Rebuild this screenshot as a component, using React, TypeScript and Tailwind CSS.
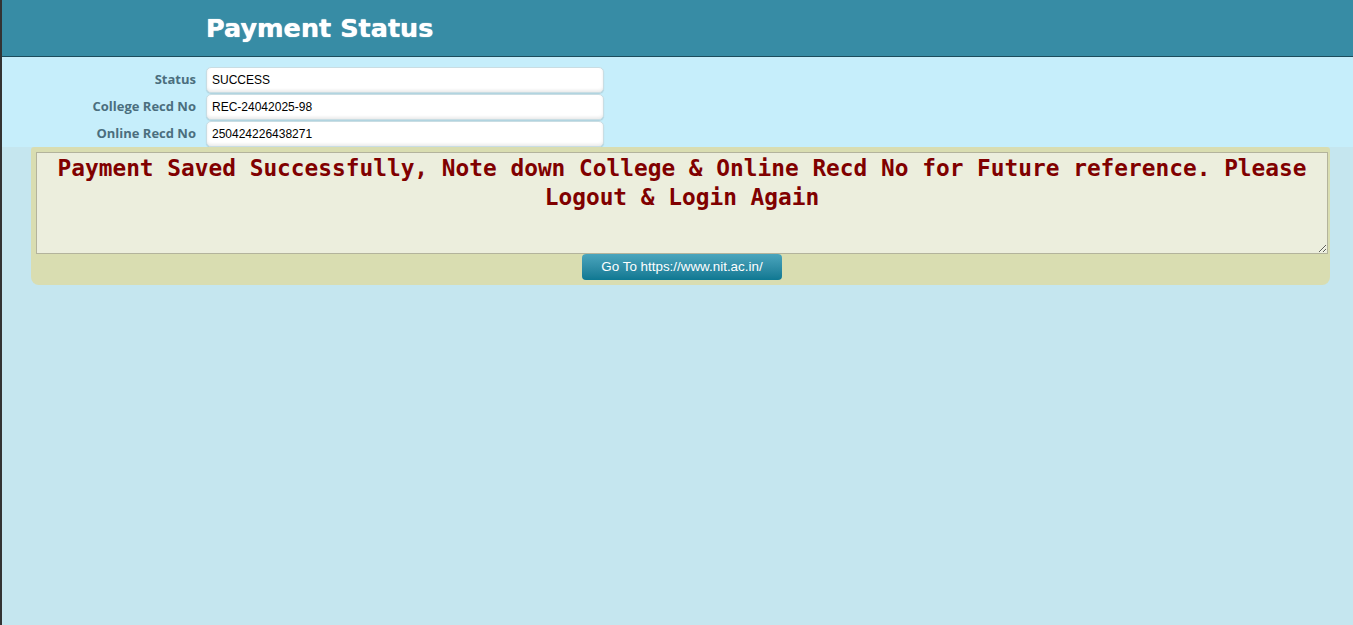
export default function App() {
  const rows = [
    { label: "Status", value: "SUCCESS" },
    { label: "College Recd No", value: "REC-24042025-98" },
    { label: "Online Recd No", value: "250424226438271" },
  ];

  return (
    <div className="min-h-screen flex bg-[#333]">
      <div className="w-[2px] shrink-0" />
      <div className="flex-1 min-h-screen bg-[#c5e6ef] flex flex-col">
        {/* header */}
        <div className="h-[56px] bg-[#378ca5] border-b border-[#1c4d5d] flex items-center pl-[204px] box-content">
          <h1 className="text-white text-[25.5px] font-bold font-['Comic_Sans_MS','DejaVu_Sans',sans-serif] [text-shadow:0_0_1px_#ffffff]">
            Payment Status
          </h1>
        </div>

        {/* fields */}
        <div className="bg-[#c6eefb] pt-[10px] flex flex-col gap-[1px]">
          {rows.map((r) => (
            <div key={r.label} className="flex items-center">
              <label className="w-[194px] text-right text-[13px] font-bold text-[#4b6e7e] font-['Open_Sans',sans-serif]">
                {r.label}
              </label>
              <input
                readOnly
                value={r.value}
                className="ml-[10px] w-[398px] h-[26px] rounded-[5px] bg-white border border-[#c9dde3] pl-[5px] text-[12px] text-black font-['Liberation_Sans',Arial,sans-serif] shadow-[inset_0_-2px_3px_rgba(0,0,0,0.08),0_1px_1px_rgba(0,0,0,0.12)] outline-none"
              />
            </div>
          ))}
        </div>

        {/* message panel */}
        <div className="ml-[29px] mr-[23px] bg-[#d9ddb1] rounded-b-[8px] rounded-t-[3px] pl-[5px] pr-[2px] pt-[5px] pb-[5px] flex flex-col items-center">
          <textarea
            readOnly
            value="Payment Saved Successfully, Note down College & Online Recd No for Future reference. Please Logout & Login Again"
            className="w-full h-[102px] bg-[#eceedd] border border-[#b3b39c] text-center text-[#800000] font-bold text-[22.8px] leading-[29px] px-[2px] pt-[1px] font-['DejaVu_Sans_Mono','Liberation_Mono',monospace] outline-none"
          />
          <button className="w-[200px] h-[26px] rounded-[4px] bg-gradient-to-b from-[#4aa5bd] to-[#0d7892] text-white text-[13.4px] font-['Liberation_Sans',Arial,sans-serif]">
            Go To https://www.nit.ac.in/
          </button>
        </div>
      </div>
    </div>
  );
}
